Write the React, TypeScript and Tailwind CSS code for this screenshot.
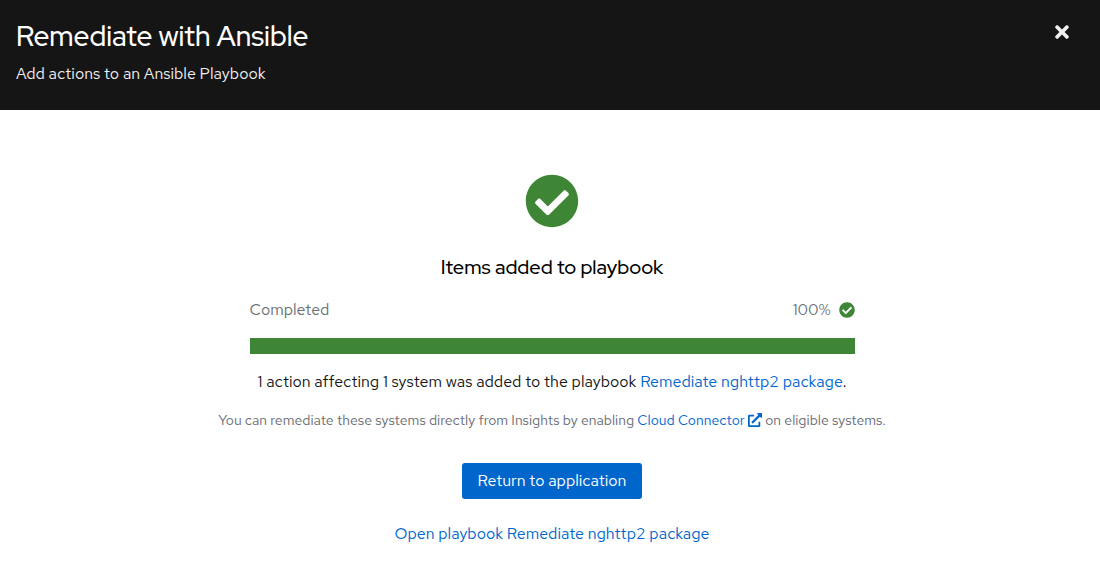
import { FaCheckCircle, FaExternalLinkAlt, FaTimes } from "react-icons/fa";

const linkClass = "text-[#0066cc] hover:underline";
const headingFont = "font-['Red_Hat_Display','Red_Hat_Text','Lato',sans-serif] font-medium";

export default function App() {
  return (
    <div className="min-h-screen bg-white font-['Red_Hat_Text','Lato',sans-serif] text-base leading-6 text-[#151515]">
      <header className="flex items-start justify-between bg-[#151515] pt-4 pr-3 pb-6 pl-4 text-white">
        <div>
          <h1 className={`text-[28px] leading-10 ${headingFont}`}>Remediate with Ansible</h1>
          <p className="mt-1.5 text-[#f0f0f0]">Add actions to an Ansible Playbook</p>
        </div>
        <button type="button" aria-label="Close" className="px-4 py-1.5">
          <FaTimes className="size-5 text-[#f0f0f0]" />
        </button>
      </header>
      <main className="flex flex-col items-center pt-16 pr-4 pl-5 text-center">
        <FaCheckCircle className="size-[54px] text-[#3e8635]" />
        <h2 className={`mt-6 text-xl leading-[30px] text-black ${headingFont}`}>
          Items added to playbook
        </h2>
        <div className="mt-4 w-full max-w-[605px]">
          <div className="flex items-center justify-between text-[#6a6e73]">
            <span id="progress-label">Completed</span>
            <span className="flex items-center gap-2">
              100% <FaCheckCircle className="size-4 text-[#3e8635]" />
            </span>
          </div>
          <div
            role="progressbar"
            aria-labelledby="progress-label"
            aria-valuenow={100}
            aria-valuemin={0}
            aria-valuemax={100}
            className="mt-4 h-4 bg-[#3e8635]"
          />
        </div>
        <p className="mt-4">
          1 action affecting 1 system was added to the playbook{" "}
          <a href="#playbook" className={linkClass}>Remediate nghttp2 package</a>.
        </p>
        <p className="mt-4 text-sm leading-5 text-[#6a6e73]">
          You can remediate these systems directly from Insights by enabling{" "}
          <a href="#connector" className={linkClass}>
            Cloud Connector <FaExternalLinkAlt className="inline size-3.5 align-[-2px]" />
          </a>{" "}
          on eligible systems.
        </p>
        <button type="button" className="mt-[33px] rounded-[3px] bg-[#0066cc] px-4 py-1.5 text-white">
          Return to application
        </button>
        <a href="#open-playbook" className={`mt-[23px] ${linkClass}`}>
          Open playbook Remediate nghttp2 package
        </a>
      </main>
    </div>
  );
}
